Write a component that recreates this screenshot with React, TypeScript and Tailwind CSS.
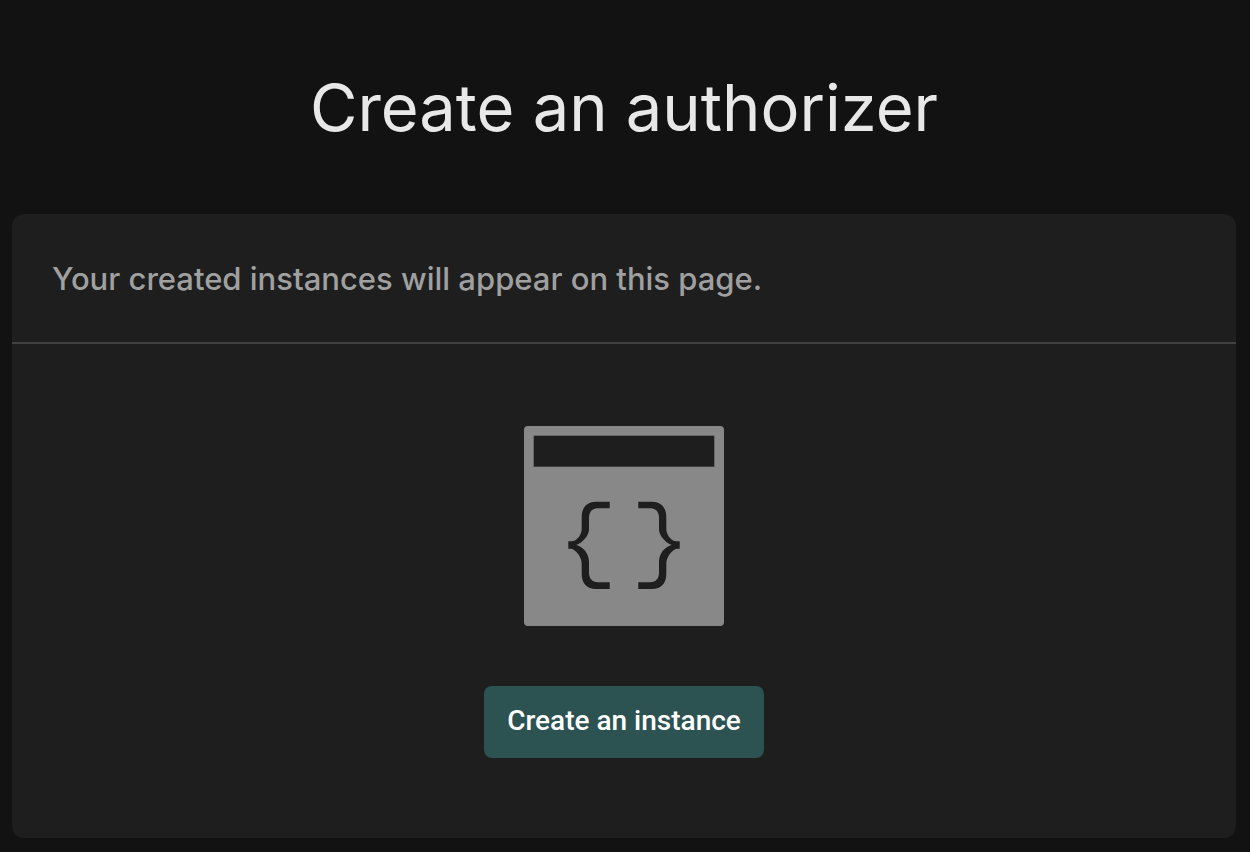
const BRACE =
  "M85.7 75.7H72C63 75.7 57.7 81.5 57.7 91V103C57.7 108.5 53 115.3 47.5 115.3H44.3V122.8H46.5C51.5 122.8 57.7 131 57.7 138V148C57.7 157.5 63 163 72 163H85.7V156.2H74C68 156.2 65 152.5 65 146.5V136C65 128 60 121.5 52.3 119.1C59.5 116 65 109.5 65 103V92C65 86 68 82.3 74 82.3H85.7Z";

function CodeWindowIcon() {
  return (
    <svg width="200" height="200" viewBox="0 0 200 200" aria-hidden="true">
      <rect width="200" height="200" rx="4" fill="#888888" />
      <rect x="9.7" y="9.7" width="180.6" height="31" fill="#1e1e1e" />
      <path d={BRACE} fill="#1e1e1e" />
      <path d={BRACE} fill="#1e1e1e" transform="matrix(-1 0 0 1 200 0)" />
    </svg>
  );
}

export default function App() {
  return (
    <main className="min-h-screen bg-[#121212] pt-16 pr-3.5 pb-3.5 pl-3 font-['Inter',sans-serif]">
      <h1 className="text-center text-[65px] leading-[88px] font-normal text-[#e8e8e8]">
        Create an authorizer
      </h1>
      <section className="mt-[62px] overflow-hidden rounded-xl bg-[#1e1e1e]">
        <p className="border-b-2 border-[#414141] px-10 pt-[45px] pb-[43px] text-[31px] leading-10 font-medium text-[#a0a0a0]">
          Your created instances will appear on this page.
        </p>
        <div className="flex flex-col items-center gap-15 pt-[82px] pb-20">
          <CodeWindowIcon />
          <button
            type="button"
            className="h-18 rounded-lg bg-[#2c5252] px-[23px] pb-0.5 font-['Roboto',sans-serif] text-[28px] leading-8 font-medium text-white"
          >
            Create an instance
          </button>
        </div>
      </section>
    </main>
  );
}
